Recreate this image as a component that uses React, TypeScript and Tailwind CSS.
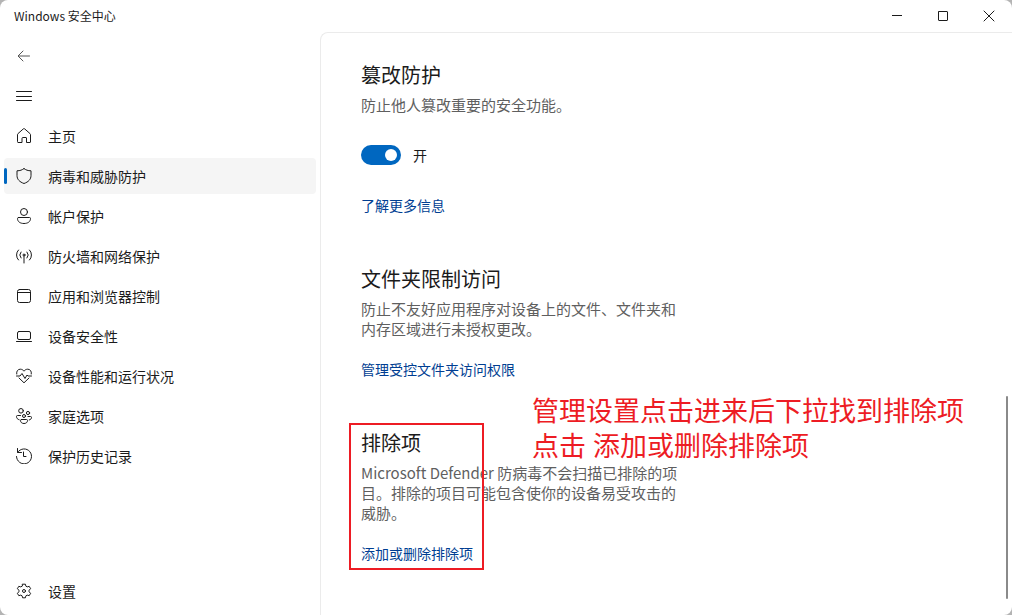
import React from "react";

type IconProps = { children: React.ReactNode };

function Icon({ children }: IconProps) {
  return (
    <svg
      viewBox="0 0 16 16"
      className="h-4 w-4 shrink-0"
      fill="none"
      stroke="currentColor"
      strokeLinecap="round"
      strokeLinejoin="round"
      aria-hidden="true"
    >
      {children}
    </svg>
  );
}

const navItems = [
  {
    label: "主页",
    icon: <path d="M1.500 6.500a1 1 0 0 1 .4-.8L7.300.9a1 1 0 0 1 1.400 0l5.400 4.800a1 1 0 0 1 .4.8V14a.5.5 0 0 1-.5.500h-3.500V10a.5.5 0 0 0-.5-.500H7a1 1 0 0 0-1 1v4H2a.5.5 0 0 1-.5-.5z" />,
  },
  {
    label: "病毒和威胁防护",
    active: true,
    icon: <path d="M8 .6C9.800 2 12 2.800 15 2.800v4.700c0 3.800-2.500 6.400-7 8-4.500-1.600-7-4.200-7-8V2.800C4 2.800 6.200 2 8 .6z" />,
  },
  {
    label: "帐户保护",
    icon: (
      <>
        <circle cx="8" cy="4" r="3.500" />
        <path d="M2.500 9.500h11a1 1 0 0 1 1 1c0 3.200-2.700 5-6.500 5s-6.500-1.800-6.500-5a1 1 0 0 1 1-1z" />
      </>
    ),
  },
  {
    label: "防火墙和网络保护",
    icon: (
      <>
        <circle cx="8" cy="7" r="1" />
        <path d="M8 8v7M5 10a4.500 4.500 0 0 1 0-6M11 10a4.500 4.500 0 0 0 0-6M2.500 12a7 7 0 0 1 0-10M13.500 12a7 7 0 0 0 0-10" />
      </>
    ),
  },
  {
    label: "应用和浏览器控制",
    icon: (
      <>
        <rect x="1.500" y="1.500" width="13" height="13" rx="2" />
        <path d="M1.500 4.500h13" />
      </>
    ),
  },
  {
    label: "设备安全性",
    icon: (
      <>
        <rect x="1.500" y="3.500" width="13" height="8" rx="1.500" />
        <path d="M.5 13.500h15" />
      </>
    ),
  },
  {
    label: "设备性能和运行状况",
    icon: (
      <>
        <path d="M.7 6C.2 3 2 1.200 4.300 1.200 6 1.200 7.200 2 8 3.200c.8-1.200 2-2 3.700-2 2.300 0 4.100 1.800 3.600 4.800M3 10l5 4.800 5-4.800" />
        <path d="M.5 8H4l2-2.500 3 5L11 7l1 1h3.500" />
      </>
    ),
  },
  {
    label: "家庭选项",
    icon: (
      <>
        <circle cx="5" cy="2.800" r="2.300" />
        <circle cx="12" cy="5" r="1.600" />
        <circle cx="8" cy="8" r="1.500" />
        <path d="M4.500 7.500h-3a1 1 0 0 0-1 1c0 1.700 1 2.800 2.700 3.300M12 8.500h2.500a1 1 0 0 1 1 1c0 1.300-.9 2.200-2.300 2.500M5.500 11.500h5a1 1 0 0 1 1 1c0 1.800-1.400 3-3.500 3s-3.500-1.200-3.500-3a1 1 0 0 1 1-1z" />
      </>
    ),
  },
  {
    label: "保护历史记录",
    icon: <path d="M1.500.5v4h4M1.700 4.300A7.500 7.500 0 1 1 .5 8.500M7.500 4v4.500H10" />,
  },
];

const navButton = "relative flex h-9 items-center gap-4 rounded px-3 text-left text-sm";
const link = "block w-fit text-sm text-[#003e92]";
const body = "mt-1 text-[15px] leading-5 text-[#5f5f5f]";
const heading = "text-xl leading-8";

function TitleBar() {
  return (
    <header className="flex h-8 shrink-0 items-center justify-between pl-3.5">
      <span className="text-xs">Windows 安全中心</span>
      <div className="flex h-full">
        <button aria-label="最小化" className="flex w-[46px] items-center justify-center">
          <Icon>
            <path d="M3 7.500h10" strokeLinecap="butt" />
          </Icon>
        </button>
        <button aria-label="最大化" className="flex w-[46px] items-center justify-center">
          <Icon>
            <rect x="3.500" y="3.500" width="9" height="9" rx=".5" />
          </Icon>
        </button>
        <button aria-label="关闭" className="flex w-[46px] items-center justify-center">
          <Icon>
            <path d="m3 3 10 10M13 3 3 13" />
          </Icon>
        </button>
      </div>
    </header>
  );
}

function Sidebar() {
  return (
    <nav className="flex w-80 shrink-0 flex-col gap-1 px-1 py-1.5">
      <button aria-label="返回" className={navButton}>
        <Icon>
          <path d="M2.500 8h11M7 3 2 8l5 5" stroke="#555" />
        </Icon>
      </button>
      <button aria-label="打开导航" className={navButton}>
        <Icon>
          <path d="M.5 3.500h15M.5 8.500h15M.5 12.500h15" />
        </Icon>
      </button>
      {navItems.map((item) => (
        <button
          key={item.label}
          aria-current={item.active ? "page" : undefined}
          className={`${navButton} ${item.active ? "bg-[#f5f5f5]" : ""}`}
        >
          {item.active && <span className="absolute left-0 h-4 w-[3px] rounded-full bg-[#0067c0]" />}
          <Icon>{item.icon}</Icon>
          {item.label}
        </button>
      ))}
      <button className={`${navButton} mt-auto`}>
        <Icon>
          <path d="M6.600 1.200h2.800l.5 2 1.300.7 2-.6 1.400 2.400-1.500 1.500v1.600l1.500 1.500-1.400 2.400-2-.6-1.300.7-.5 2H6.600l-.5-2-1.300-.7-2 .6-1.400-2.400 1.500-1.500V7.200L1.400 5.700l1.400-2.400 2 .6 1.300-.7z" />
          <circle cx="8" cy="8" r="1.500" />
        </Icon>
        设置
      </button>
    </nav>
  );
}

export default function App() {
  return (
    <div className="min-h-screen bg-[#b4b4b4] font-['Noto_Sans_CJK_SC',sans-serif] text-[#1b1b1b]">
      <div className="flex min-h-screen flex-col rounded-lg bg-white">
        <TitleBar />
        <div className="flex grow">
          <Sidebar />
          <main className="flex grow justify-between rounded-tl-lg border-t border-l border-[#ebebeb] pr-1 pl-10">
            <div className="w-80 space-y-12 pt-[26px]">
              <section>
                <h2 className={heading}>篡改防护</h2>
                <p className={body}>防止他人篡改重要的安全功能。</p>
                <label className="mt-[30px] flex h-5 w-fit items-center gap-3 text-sm">
                  <input type="checkbox" role="switch" defaultChecked className="peer sr-only" />
                  <span className="flex h-5 w-10 items-center justify-end rounded-full bg-[#0067c0] px-1">
                    <span className="h-3 w-3 rounded-full bg-white" />
                  </span>
                  开
                </label>
                <a href="#learn-more" className={`${link} mt-[30px]`}>
                  了解更多信息
                </a>
              </section>

              <section>
                <h2 className={heading}>文件夹限制访问</h2>
                <p className={body}>防止不友好应用程序对设备上的文件、文件夹和内存区域进行未授权更改。</p>
                <a href="#folder-access" className={`${link} mt-5`}>
                  管理受控文件夹访问权限
                </a>
              </section>

              <section className="relative">
                <h2 className={heading}>排除项</h2>
                <p className={body}>Microsoft Defender 防病毒不会扫描已排除的项目。排除的项目可能包含使你的设备易受攻击的威胁。</p>
                <a href="#exclusions" className={`${link} mt-5`}>
                  添加或删除排除项
                </a>

                {/* 标注 */}
                <div className="pointer-events-none absolute -top-1 -left-3 h-[147px] w-[135px] border-2 border-[#ed1c24]" />
                <p className="pointer-events-none absolute -top-[34px] left-[171px] font-['Open_Sans','Noto_Sans_CJK_SC',sans-serif] text-[27px] leading-[35px] whitespace-nowrap text-[#ed1c24]">
                  管理设置点击进来后下拉找到排除项
                  <br />
                  点击 添加或删除排除项
                </p>
              </section>
            </div>
            <div className="mb-4 h-[203px] w-0.5 self-end rounded-full bg-[#8a8a8a]" />
          </main>
        </div>
      </div>
    </div>
  );
}
